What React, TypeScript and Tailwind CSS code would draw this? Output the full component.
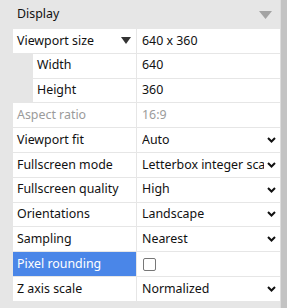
import React from "react";

type Row = {
  label: string;
  value?: string;
  indent?: boolean;
  disabled?: boolean;
  select?: boolean;
  check?: boolean;
  selected?: boolean;
  caret?: boolean;
};

const rows: Row[] = [
  { label: "Viewport size", value: "640 x 360", caret: true },
  { label: "Width", value: "640", indent: true },
  { label: "Height", value: "360", indent: true },
  { label: "Aspect ratio", value: "16:9", disabled: true },
  { label: "Viewport fit", value: "Auto", select: true },
  { label: "Fullscreen mode", value: "Letterbox integer scale", select: true },
  { label: "Fullscreen quality", value: "High", select: true },
  { label: "Orientations", value: "Landscape", select: true },
  { label: "Sampling", value: "Nearest", select: true },
  { label: "Pixel rounding", check: true, selected: true },
  { label: "Z axis scale", value: "Normalized", select: true },
];

function Chevron() {
  return (
    <svg width="9" height="6" viewBox="0 0 9 6" className="shrink-0">
      <path d="M1 1 L4.5 4.5 L8 1" fill="none" stroke="#111" strokeWidth="2" />
    </svg>
  );
}

function PropRow({ row }: { row: Row }) {
  return (
    <div className="flex h-[23.8px] mb-[1px] ml-[13px]">
      {row.indent && <div className="w-[20px] shrink-0 bg-[#e6e6e6]" />}
      <div
        className={
          "flex items-center justify-between pl-[4px] pr-[5px] shrink-0 " +
          (row.indent ? "w-[103px] " : "w-[123px] ") +
          (row.selected ? "bg-[#4a86e8] text-white" : "bg-white") +
          (row.disabled ? " text-[#9b9b9b]" : row.selected ? "" : " text-[#111]")
        }
      >
        <span className="whitespace-nowrap">{row.label}</span>
        {row.caret && (
          <svg width="10" height="7" viewBox="0 0 10 7">
            <path d="M0 0 H10 L5 7 Z" fill="#333" />
          </svg>
        )}
      </div>
      <div className="w-[1px] bg-[#e6e6e6] shrink-0" />
      <div
        className={
          "flex-1 flex items-center bg-white pl-[5px] pr-[3px] min-w-0 " +
          (row.disabled ? "text-[#9b9b9b]" : "text-[#111]")
        }
      >
        {row.check ? (
          <div className="w-[13px] h-[13px] rounded-[2px] border border-[#777] bg-white ml-[1px]" />
        ) : (
          <span className="flex-1 overflow-hidden whitespace-nowrap">{row.value}</span>
        )}
        {row.select && (
          <span className="pl-[3px] pr-[1px] flex items-center">
            <Chevron />
          </span>
        )}
      </div>
    </div>
  );
}

export default function App() {
  return (
    <div
      className="w-[287px] h-[308px] bg-[#e6e6e6] flex overflow-hidden text-[12.4px]"
      style={{ fontFamily: '"Noto Sans", "DejaVu Sans", sans-serif' }}
    >
      <div className="w-[280px] flex flex-col">
        <div className="h-[29px] flex items-center justify-between pl-[17px] pr-[8px] text-[#111]">
          <span>Display</span>
          <svg width="13" height="8" viewBox="0 0 13 8">
            <path d="M0 0 H13 L6.5 8 Z" fill="#a3a3a3" />
          </svg>
        </div>
        {rows.map((r) => (
          <PropRow key={r.label} row={r} />
        ))}
      </div>
      <div className="w-[1px] bg-[#dcdcdc]" />
      <div className="w-[6px] bg-[#c3c3c3]" />
    </div>
  );
}
